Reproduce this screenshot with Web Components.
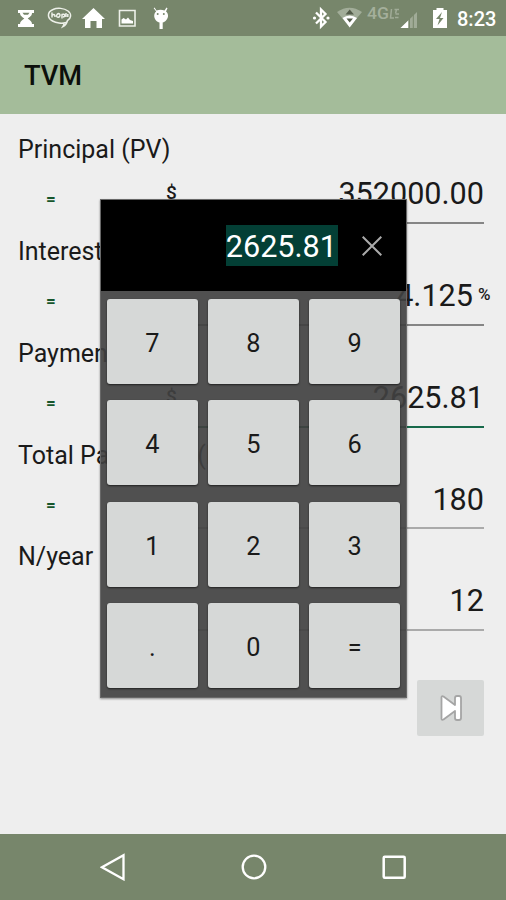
<!DOCTYPE html>
<html lang="en">
<head>
<meta charset="utf-8">
<title>TVM</title>
<style>
    body { margin: 0; font-family: Roboto, "Liberation Sans", sans-serif; color: #1a1a1a; }
</style>
</head>
<body>
<tvm-screen>
    <status-bar slot="status" time="8:23"></status-bar>
    <app-bar slot="bar">TVM</app-bar>
    <value-row label="Principal (PV)" sign="=" prefix="$" value="352000.00"></value-row>
    <value-row label="Interest" sign="=" value="4.125" suffix="%"></value-row>
    <value-row label="Payment" sign="=" prefix="$" value="2625.81" active></value-row>
    <value-row label="Total Payments (N)" sign="=" value="180" light></value-row>
    <value-row label="N/year" value="12" light></value-row>
    <next-button></next-button>
    <key-pad slot="dialog" value="2625.81"></key-pad>
    <nav-bar slot="nav"></nav-bar>
</tvm-screen>

<script>
class TvmScreen extends HTMLElement {
    constructor() {
        super();
        this.attachShadow({ mode: 'open' });
        this.shadowRoot.innerHTML = `
            <style>
                :host { display: flex; flex-direction: column; position: relative; width: 506px; height: 900px; background: #eee; overflow: hidden; }
                main { flex: 1; display: flex; flex-direction: column; padding: 8.100px 0 0 18px; box-sizing: border-box; min-height: 0; }
                .dialog { position: absolute; left: 100px; top: 199px; }
            </style>
            <slot name="status"></slot>
            <slot name="bar"></slot>
            <main><slot></slot></main>
            <slot name="nav"></slot>
            <div class="dialog"><slot name="dialog"></slot></div>
        `;
    }
}

class StatusBar extends HTMLElement {
    constructor() {
        super();
        this.attachShadow({ mode: 'open' });
        this.shadowRoot.innerHTML = `
            <style>
                :host { display: flex; justify-content: space-between; height: 36px; background: #77866b; color: #fff; }
                svg { display: block; }
                .right { display: flex; }
                .time { width: 49px; font-size: 20px; font-weight: 500; line-height: 38px; }
            </style>
            <svg width="180" height="36" fill="#fff">
                <path d="M18 10h16v3h-2c0 3-2.600 4-4.300 5.500C30 20 32 21.500 32 24h2v3H18v-3h2c0-2.500 2-4 4.300-5.500C22.600 17 20 16 20 13h-2z"/>
                <path d="M22.500 12.800h7l-1.500 2h-4z" fill="#77866b"/>
                <g fill="none" stroke="#edf0e9" stroke-width="1.500">
                    <path d="M66 22.500C62 24 56 23 52.500 21 47 18 47 12 53 9.500 57.500 7.500 64 8 68 11 72 14 71 18.500 67.500 20.500 67 22.500 65 25.500 63 26.500 64 25 64 23.500 63.500 23"/>
                    <path d="M52 12.500v5M52 15.500c2-2 3-1 3 1.500M57 14.500c2-2 4 0 2.500 2s-4 0-2.500-2M62 18.500v-4c3-1.500 4 2 1 2.500M66 13v4M67.800 14v3" stroke-width="1.500"/>
                </g>
                <path d="M93.500 8L105 19h-3v9h-5.500v-7h-6v7H85v-9h-3z"/>
                <path d="M119.500 10.500h15.500v15.500h-15.500z" fill="none" stroke="#edf0e9" stroke-width="1.600"/>
                <path d="M121.500 23.500v-4l2-1.500 2.500 1.500 2-2 2 2.500 3 1v2.500z"/>
                <path d="M154.500 7.500l2 3q4-1.500 8 0l2-3 1 .7-1.500 3.300c2.500 2 3 6 0 9-1 1.200-2 1.700-3.300 2V29h-3.200v-6.500c-1.300-.3-2.500-.8-3.500-2-2.500-3-2.300-7 .2-9l-2.500-3.300z"/>
                <circle cx="157.700" cy="14" r="1" fill="#77866b"/><circle cx="163.800" cy="14" r="1" fill="#77866b"/>
            </svg>
            <div class="right">
                <svg width="147" height="36" viewBox="310 0 147 36">
                    <path d="M316 12.500l9.500 9.500-4.500 4.500V9.500l4.500 4.500-9.500 9.500" fill="none" stroke="#fff" stroke-width="2.300"/>
                    <circle cx="314.500" cy="18" r="1.600" fill="#fff"/><circle cx="328" cy="18" r="1.600" fill="#fff"/>
                    <path d="M337 12q12.500-8.500 25 0L349.700 27z" fill="#a2ad99"/>
                    <path d="M342.500 18q7-5 14.500 0l-7.300 9.500z" fill="#fff"/>
                    <path d="M345.500 14.500l4.200-5 4.300 5zM346.500 18.500h6.500l-3.300 4z" fill="#535c4a"/>
                    <text x="367" y="18.500" font-size="16.500" font-weight="500" fill="#a4af9b" textLength="22" lengthAdjust="spacingAndGlyphs">4G</text>
                    <path d="M391.500 9l-1 9h3.500M394.500 9.500h4.500M396.500 9.500l-1 4M395.500 14h3.500M395 17.500h3.500" fill="none" stroke="#a0ab97" stroke-width="1.500"/>
                    <path d="M417 12v16h-16.500z" fill="#a0ab97"/>
                    <path d="M408 20.800V28h-7.500z" fill="#fff"/>
                    <path d="M409.500 18v10M413.300 14v14" stroke="#77866b"/>
                    <path d="M433 10h3.500V8h7v2h3.500v18h-14z" fill="#fff"/>
                    <path d="M442 12l-6 7h3.500l-2 6.500 6-7.500H440z" fill="#77866b"/>
                </svg>
                <div class="time">${this.getAttribute('time')}</div>
            </div>
        `;
    }
}

class AppBar extends HTMLElement {
    constructor() {
        super();
        this.attachShadow({ mode: 'open' });
        this.shadowRoot.innerHTML = `
            <style>
                :host { display: flex; align-items: center; height: 78.400px; padding: 1px 0 0 24px; box-sizing: border-box; background: #a4bc9a; font-size: 27.200px; font-weight: 500; color: #0c0f0b; }
            </style>
            <slot></slot>
        `;
    }
}

class ValueRow extends HTMLElement {
    constructor() {
        super();
        this.attachShadow({ mode: 'open' });
        const get = (name) => this.getAttribute(name) || '';
        this.shadowRoot.innerHTML = `
            <style>
                :host { display: block; flex: none; height: 101.700px; --line: #858585; }
                :host([light]) { --line: #aaa; }
                :host([active]) { --line: #17694a; }
                .label { height: 56px; line-height: 56px; font-size: 25px; white-space: nowrap; }
                .field { display: grid; grid-template-columns: 66px 110px 290px; height: 45.700px; }
                .sign { text-align: center; font-size: 17px; font-weight: 700; line-height: 42px; color: #16562c; }
                .prefix { padding-left: 82px; font-size: 19px; font-weight: 500; line-height: 30px; }
                .input { display: flex; justify-content: flex-end; box-sizing: border-box; border-bottom: 2px solid var(--line); font-size: 30.600px; line-height: 31px; }
                .suffix { width: 6px; padding-left: 5px; font-size: 17px; font-weight: 500; line-height: 29px; white-space: nowrap; }
            </style>
            <div class="label">${get('label')}</div>
            <div class="field">
                <span class="sign">${get('sign')}</span>
                <span class="prefix">${get('prefix')}</span>
                <span class="input"><span>${get('value')}</span>${get('suffix') ? `<span class="suffix">${get('suffix')}</span>` : ''}</span>
            </div>
        `;
    }
}

class NextButton extends HTMLElement {
    constructor() {
        super();
        this.attachShadow({ mode: 'open' });
        this.shadowRoot.innerHTML = `
            <style>
                :host { display: flex; align-items: center; justify-content: center; align-self: flex-end; width: 67px; height: 56px; margin: 49px 22px 0 0; border-radius: 2px; background: #d6d8d7; }
            </style>
            <svg width="24" height="28" fill="#fff" stroke="#a5a5a5" stroke-width="1.800" stroke-linejoin="round">
                <path d="M2.500 3.500q0-2 2-1L16 11V4q0-2 2-2h2q2 0 2 2v20q0 2-2 2h-2q-2 0-2-2v-7L4.500 25.500q-2 1-2-1z"/>
            </svg>
        `;
    }
}

class KeyPad extends HTMLElement {
    constructor() {
        super();
        this.attachShadow({ mode: 'open' });
        const keys = ['7', '8', '9', '4', '5', '6', '1', '2', '3', '.', '0', '='];
        this.shadowRoot.innerHTML = `
            <style>
                :host { display: block; box-sizing: border-box; width: 307px; height: 499px; border: 1px solid #686868; box-shadow: 0 1px 2px rgba(0, 0, 0, .4); }
                .display { display: flex; align-items: center; justify-content: flex-end; height: 91px; padding-right: 24px; box-sizing: border-box; background: #000; color: #fff; }
                .value { height: 41px; line-height: 44px; padding-right: 1px; font-size: 30.600px; background: #033f35; }
                svg { margin-left: 24px; }
                .keys { display: grid; grid-template-columns: repeat(3, 90.500px); grid-auto-rows: 85px; gap: 16.200px 10.700px; box-sizing: border-box; height: 406px; padding: 8.300px 6px 7px; background: rgba(65, 65, 65, .915); }
                .key { display: flex; align-items: center; justify-content: center; padding-top: 4px; box-sizing: border-box; border-radius: 3px; background: #d6d8d7; font-size: 25.300px; box-shadow: 0 1px 2px rgba(0, 0, 0, .6); }
            </style>
            <div class="display">
                <span class="value">${this.getAttribute('value')}</span>
                <svg width="20" height="20" stroke="#aaa" stroke-width="2"><path d="M.7.7l18.600 18.600M19.300.7L.7 19.300"/></svg>
            </div>
            <div class="keys">${keys.map((key) => `<div class="key">${key}</div>`).join('')}</div>
        `;
    }
}

class NavBar extends HTMLElement {
    constructor() {
        super();
        this.attachShadow({ mode: 'open' });
        this.shadowRoot.innerHTML = `
            <style>
                :host { display: flex; justify-content: center; gap: 112px; align-items: center; flex: none; height: 66.500px; padding-left: 1px; background: #77866b; }
            </style>
            <svg width="28" height="28"><path d="M23.500 2.200v24L2 14.200z" fill="none" stroke="#fff" stroke-width="2.300"/></svg>
            <svg width="28" height="28"><circle cx="14" cy="14" r="11.300" fill="none" stroke="#fff" stroke-width="2.300"/></svg>
            <svg width="28" height="28"><rect x="3.700" y="3.700" width="21" height="21" rx="1" fill="none" stroke="#fff" stroke-width="2.500"/></svg>
        `;
    }
}

customElements.define('tvm-screen', TvmScreen);
customElements.define('status-bar', StatusBar);
customElements.define('app-bar', AppBar);
customElements.define('value-row', ValueRow);
customElements.define('next-button', NextButton);
customElements.define('key-pad', KeyPad);
customElements.define('nav-bar', NavBar);
</script>
</body>
</html>
